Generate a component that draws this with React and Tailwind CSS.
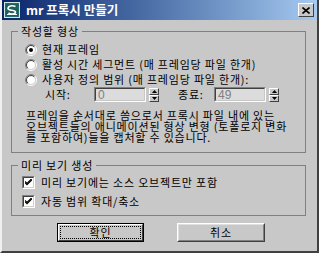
import React from "react";

const KR = { fontFamily: '"Noto Sans CJK KR", "Noto Sans", sans-serif' };

function Radio({ checked }) {
  const o = 5.5, i = 4.5;
  const p = (r) => {
    const d = r * 0.7071;
    return { a: [6 - d, 6 + d], b: [6 + d, 6 - d] };
  };
  const po = p(o), pi = p(i);
  return (
    <svg width="12" height="12" viewBox="0 0 12 12" className="shrink-0">
      <circle cx="6" cy="6" r="4.5" fill="#ffffff" />
      <path d={`M${po.a[0]} ${po.a[1]} A${o} ${o} 0 0 1 ${po.b[0]} ${po.b[1]}`} stroke="#808080" fill="none" />
      <path d={`M${po.b[0]} ${po.b[1]} A${o} ${o} 0 0 1 ${po.a[0]} ${po.a[1]}`} stroke="#ffffff" fill="none" />
      <path d={`M${pi.a[0]} ${pi.a[1]} A${i} ${i} 0 0 1 ${pi.b[0]} ${pi.b[1]}`} stroke="#404040" fill="none" />
      <path d={`M${pi.b[0]} ${pi.b[1]} A${i} ${i} 0 0 1 ${pi.a[0]} ${pi.a[1]}`} stroke="#d4d0c8" fill="none" />
      {checked && <circle cx="6" cy="6" r="2" fill="#000000" />}
    </svg>
  );
}

function Check() {
  return (
    <div className="w-[13px] h-[13px] shrink-0 border border-t-[#808080] border-l-[#808080] border-r-[#ffffff] border-b-[#ffffff]">
      <div className="w-full h-full border border-t-[#404040] border-l-[#404040] border-r-[#d4d0c8] border-b-[#d4d0c8] bg-white flex items-center justify-center">
        <svg width="7" height="7" viewBox="0 0 7 7">
          <path d="M0 2.5 L2 4.5 L7 -0.5" stroke="#000" strokeWidth="1.2" fill="none" />
          <path d="M0 3.7 L2 5.7 L7 0.7" stroke="#000" strokeWidth="1.2" fill="none" />
        </svg>
      </div>
    </div>
  );
}

function Spinner() {
  const Btn = ({ up }) => (
    <div className="w-[10px] h-[7px] bg-[#c8c8c8] border border-t-[#ffffff] border-l-[#ffffff] border-r-[#404040] border-b-[#404040] flex items-center justify-center">
      <svg width="5" height="3" viewBox="0 0 5 3">
        {up ? <path d="M2.5 0L5 3H0z" fill="#000" /> : <path d="M0 0H5L2.5 3z" fill="#000" />}
      </svg>
    </div>
  );
  return (
    <div className="flex flex-col ml-[3px]">
      <Btn up />
      <Btn />
    </div>
  );
}

function Field({ value }) {
  return (
    <div className="w-[52px] h-[15px] border border-t-[#808080] border-l-[#808080] border-r-[#ffffff] border-b-[#ffffff]">
      <div className="w-full h-full border border-t-[#404040] border-l-[#404040] border-r-[#c8c8c8] border-b-[#c8c8c8] bg-[#dcdcdc] flex items-center pl-[2px] text-[12px] leading-none tracking-normal text-[#808080]" style={{ fontFamily: '"Liberation Sans", Arial, sans-serif' }}>
        {value}
      </div>
    </div>
  );
}

function Button({ children, def }) {
  if (def) {
    return (
      <div className="w-[87px] h-[19px] border border-black">
        <div className="w-full h-full border border-t-[#ffffff] border-l-[#ffffff] border-r-[#404040] border-b-[#404040] p-[1px]">
          <div className="w-full h-full border border-dotted border-black flex items-center justify-center text-[11px] tracking-[0.8px] leading-none text-black">
            {children}
          </div>
        </div>
      </div>
    );
  }
  return (
    <div className="w-[88px] h-[19px] border border-t-[#ffffff] border-l-[#ffffff] border-r-[#404040] border-b-[#404040]">
      <div className="w-full h-full border border-t-[#e0e0e0] border-l-[#e0e0e0] border-r-[#808080] border-b-[#808080] flex items-center justify-center text-[11px] tracking-[0.8px] leading-none text-black">
        {children}
      </div>
    </div>
  );
}

function Logo() {
  return (
    <svg width="16" height="16" viewBox="0 0 16 16" className="shrink-0">
      <rect x="0.5" y="0.5" width="15" height="15" fill="#2f7d78" stroke="#cfe8e4" />
      <rect x="1.5" y="1.5" width="13" height="13" fill="#1d5f5c" />
      <path d="M11.5 4.5 C8 3 4 4 4 6.5 C4 9 11.5 7.5 11.5 10 C11.5 12.5 6.5 12.5 4.5 11" stroke="#ffffff" strokeWidth="1.6" fill="none" />
      <path d="M3 12.5 H13" stroke="#ffffff" strokeWidth="1" />
    </svg>
  );
}

export default function App() {
  return (
    <div className="w-[319px] h-[253px] bg-[#c8c8c8] border-l-2 border-l-[#f0f0f0] border-r-2 border-r-[#404040] border-b-2 border-b-[#404040] flex flex-col text-black select-none" style={KR}>
      <div className="h-[20px] flex items-center pl-[2px] pr-[3px] bg-gradient-to-r from-[#0a246a] to-[#a6caf0]">
        <Logo />
        <div className="ml-[6px] text-white font-bold text-[12.5px] leading-none flex-1">mr 프록시 만들기</div>
        <div className="w-[16px] h-[14px] bg-[#c8c8c8] border border-t-[#ffffff] border-l-[#ffffff] border-r-[#404040] border-b-[#404040] flex items-center justify-center">
          <svg width="8" height="7" viewBox="0 0 8 7">
            <path d="M0.5 0.5 L7.5 6.5 M7.5 0.5 L0.5 6.5" stroke="#000" strokeWidth="1.6" />
          </svg>
        </div>
      </div>

      <div className="flex-1 flex flex-col px-[9px] text-[11px] tracking-[0.8px]">
        <fieldset className="mt-[5px] w-[295px] h-[128px] border border-[#808080] px-[13px]">
          <legend className="ml-[-7px] px-[3px] leading-[13px]">작성할 형상</legend>
          <div className="flex flex-col leading-[13px]">
            <div className="flex items-center gap-[5px] mt-[5px]"><Radio checked /><span>현재 프레임</span></div>
            <div className="flex items-center gap-[5px] mt-[2px]"><Radio /><span>활성 시간 세그먼트 (매 프레임당 파일 한개)</span></div>
            <div className="flex items-center gap-[5px] mt-[2px]"><Radio /><span>사용자 정의 범위 (매 프레임당 파일 한개):</span></div>
            <div className="flex items-center mt-[1px]">
              <span className="ml-[20px] w-[49px]">시작:</span>
              <Field value="0" />
              <Spinner />
              <span className="ml-[19px] w-[36px]">종료:</span>
              <Field value="49" />
              <Spinner />
            </div>
            <div className="mt-[8px] ml-[1px] leading-[11px]">
              프레임을 순서대로 씀으로서 프록시 파일 내에 있는<br />
              오브젝트들의 애니메이션된 형상 변형 (토폴로지 변화<br />
              를 포함하여)들을 캡처할 수 있습니다.
            </div>
          </div>
        </fieldset>

        <fieldset className="mt-[6px] w-[295px] h-[57px] border border-[#808080] px-[10px]">
          <legend className="ml-[-4px] px-[3px] leading-[13px]">미리 보기 생성</legend>
          <div className="flex flex-col leading-[13px]">
            <div className="flex items-center gap-[6px] mt-[4px]"><Check /><span>미리 보기에는 소스 오브젝트만 포함</span></div>
            <div className="flex items-center gap-[6px] mt-[6px]"><Check /><span>자동 범위 확대/축소</span></div>
          </div>
        </fieldset>

        <div className="flex mt-[7px] ml-[46px] gap-[33px]">
          <Button def>확인</Button>
          <Button>취소</Button>
        </div>
      </div>
    </div>
  );
}
